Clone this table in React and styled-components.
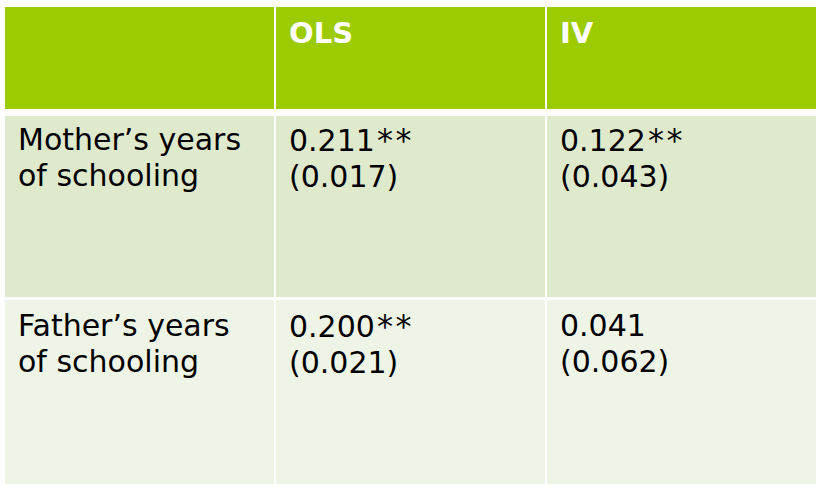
import React from "react";
import styled, { createGlobalStyle } from "styled-components";

const Global = createGlobalStyle`
  html, body { margin: 0; padding: 0; background: #ffffff; }
  body { font-family: "DejaVu Sans", Verdana, sans-serif; }
`;

const Page = styled.div`
  width: 818px;
  height: 488px;
  box-sizing: border-box;
  padding: 7px 2px 0 5px;
  background: #ffffff;
`;

const Table = styled.div`
  display: flex;
  flex-direction: column;
`;

const Row = styled.div`
  display: grid;
  grid-template-columns: 269px 269px 269px;
  column-gap: 2px;
  height: ${(p) => p.$h}px;
  margin-bottom: ${(p) => p.$gap || 0}px;
`;

const Cell = styled.div`
  background: ${(p) => p.$bg};
  box-sizing: border-box;
  padding: ${(p) => p.$pt}px 10px 0 13px;
  font-size: 30px;
  line-height: 36px;
  color: #000000;
  white-space: nowrap;
`;

const HeadCell = styled(Cell)`
  color: #ffffff;
  font-weight: bold;
  font-size: 29px;
`;

const Stars = styled.span`
  font-size: 32px;
  letter-spacing: 2.5px;
  margin-left: 2px;
`;

const HEAD = "#9bcb00";
const ROW1 = "#dfeacd";
const ROW2 = "#eff5e6";

const rows = [
  { label: ["Mother\u2019s years", "of schooling"], ols: ["0.211", "(0.017)"], olsStar: true, iv: ["0.122", "(0.043)"], ivStar: true, bg: ROW1, h: 181, gap: 3, pt: 6 },
  { label: ["Father\u2019s years", "of schooling"], ols: ["0.200", "(0.021)"], olsStar: true, iv: ["0.041", "(0.062)"], ivStar: false, bg: ROW2, h: 184, gap: 0, pt: 8 },
];

const Lines = ({ items, star }) =>
  items.map((t, i) => (
    <div key={i}>
      {t}
      {star && i === 0 ? <Stars>**</Stars> : null}
    </div>
  ));

export default function App() {
  return (
    <>
      <Global />
      <Page>
        <Table>
          <Row $h={102} $gap={7}>
            <HeadCell $bg={HEAD} $pt={8} />
            <HeadCell $bg={HEAD} $pt={8}>OLS</HeadCell>
            <HeadCell $bg={HEAD} $pt={8}>IV</HeadCell>
          </Row>
          {rows.map((r, i) => (
            <Row key={i} $h={r.h} $gap={r.gap}>
              <Cell $bg={r.bg} $pt={r.pt}><Lines items={r.label} /></Cell>
              <Cell $bg={r.bg} $pt={r.pt}><Lines items={r.ols} star={r.olsStar} /></Cell>
              <Cell $bg={r.bg} $pt={r.pt}><Lines items={r.iv} star={r.ivStar} /></Cell>
            </Row>
          ))}
        </Table>
      </Page>
    </>
  );
}
